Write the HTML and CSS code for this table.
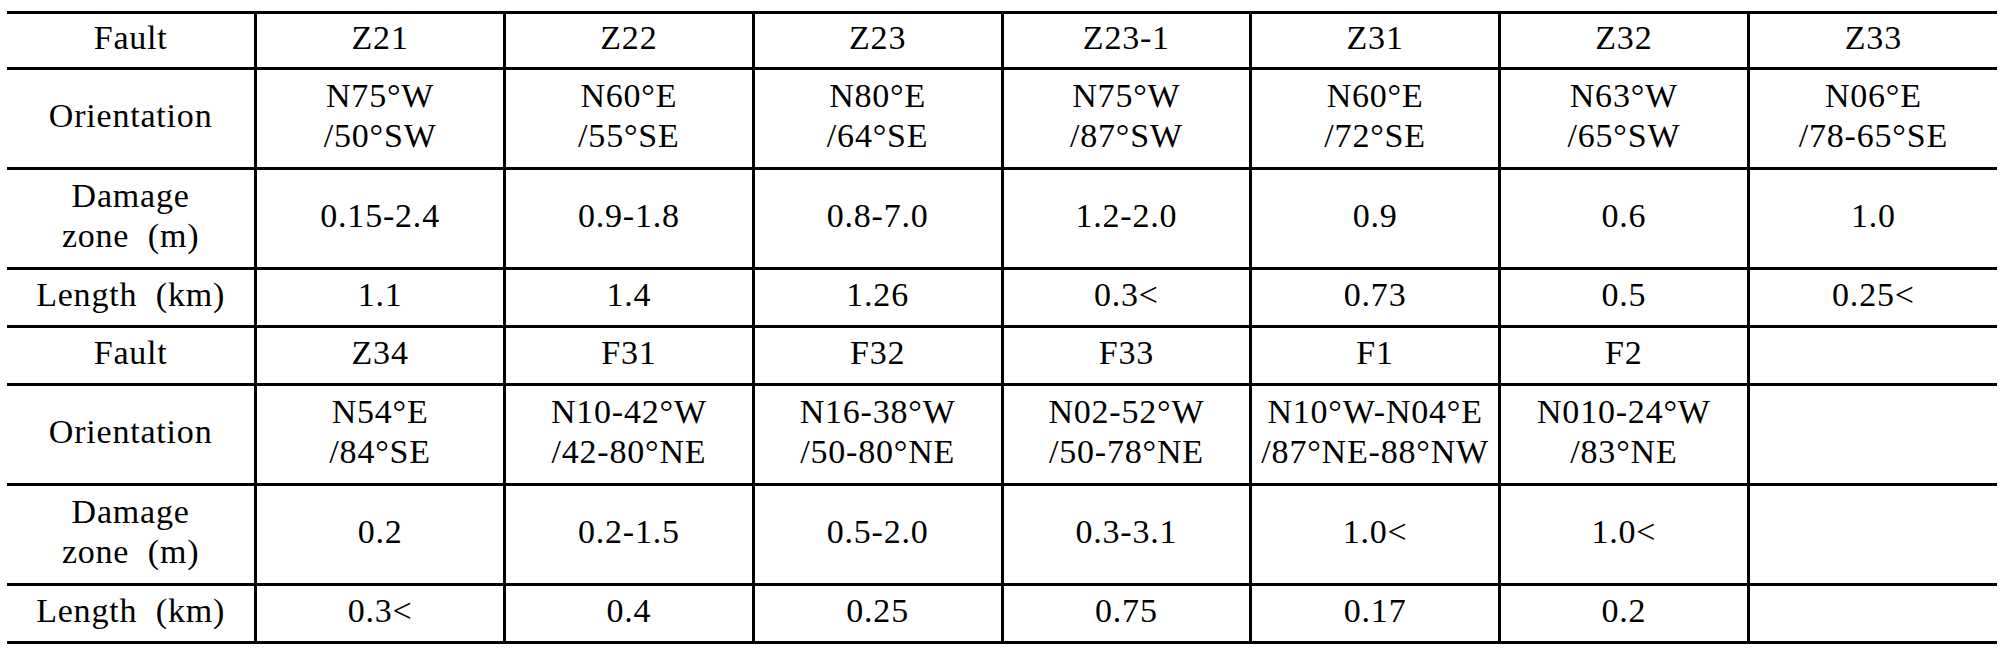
FILE: index.html
```html
<!DOCTYPE html>
<html lang="en">
  <head>
    <meta charset="UTF-8" />
    <meta name="viewport" content="width=device-width, initial-scale=1.0" />
    <title>Fault properties</title>
    <link rel="stylesheet" href="styles.css">
  </head>
  <body>
    <table class="faults">
      <tr class="short">
        <td>Fault</td>
        <td>Z21</td>
        <td>Z22</td>
        <td>Z23</td>
        <td>Z23-1</td>
        <td>Z31</td>
        <td>Z32</td>
        <td>Z33</td>
      </tr>
      <tr class="tall">
        <td>Orientation</td>
        <td>N75°W<br />/50°SW</td>
        <td>N60°E<br />/55°SE</td>
        <td>N80°E<br />/64°SE</td>
        <td>N75°W<br />/87°SW</td>
        <td>N60°E<br />/72°SE</td>
        <td>N63°W<br />/65°SW</td>
        <td>N06°E<br />/78-65°SE</td>
      </tr>
      <tr class="tall">
        <td>Damage<br />zone&nbsp;&nbsp;(m)</td>
        <td>0.15-2.4</td>
        <td>0.9-1.8</td>
        <td>0.8-7.0</td>
        <td>1.2-2.0</td>
        <td>0.9</td>
        <td>0.6</td>
        <td>1.0</td>
      </tr>
      <tr class="short">
        <td>Length&nbsp;&nbsp;(km)</td>
        <td>1.1</td>
        <td>1.4</td>
        <td>1.26</td>
        <td>0.3&lt;</td>
        <td>0.73</td>
        <td>0.5</td>
        <td>0.25&lt;</td>
      </tr>
      <tr class="short">
        <td>Fault</td>
        <td>Z34</td>
        <td>F31</td>
        <td>F32</td>
        <td>F33</td>
        <td>F1</td>
        <td>F2</td>
        <td></td>
      </tr>
      <tr class="tall">
        <td>Orientation</td>
        <td>N54°E<br />/84°SE</td>
        <td>N10-42°W<br />/42-80°NE</td>
        <td>N16-38°W<br />/50-80°NE</td>
        <td>N02-52°W<br />/50-78°NE</td>
        <td>N10°W-N04°E<br />/87°NE-88°NW</td>
        <td>N010-24°W<br />/83°NE</td>
        <td></td>
      </tr>
      <tr class="tall">
        <td>Damage<br />zone&nbsp;&nbsp;(m)</td>
        <td>0.2</td>
        <td>0.2-1.5</td>
        <td>0.5-2.0</td>
        <td>0.3-3.1</td>
        <td>1.0&lt;</td>
        <td>1.0&lt;</td>
        <td></td>
      </tr>
      <tr class="short">
        <td>Length&nbsp;&nbsp;(km)</td>
        <td>0.3&lt;</td>
        <td>0.4</td>
        <td>0.25</td>
        <td>0.75</td>
        <td>0.17</td>
        <td>0.2</td>
        <td></td>
      </tr>
    </table>
  </body>
</html>
```

FILE: styles.css
```css
* {
  margin: 0;
  padding: 0;
}
body {
  background-color: #fff;
  padding: 11px 7px 0 7px;
  font-family: "Liberation Serif", "Times New Roman", serif;
  color: #000;
}
.faults {
  width: 1990px;
  table-layout: fixed;
  border-collapse: collapse;
  border-top: 3px solid #000;
  border-bottom: 3px solid #000;
}
.faults td {
  font-size: 34px;
  line-height: 40px;
  letter-spacing: 0.8px;
  text-align: center;
  vertical-align: middle;
  padding: 0 0 6px 0;
  border: 3px solid #000;
  white-space: nowrap;
}
.faults tr td:first-child {
  border-left: none;
}
.faults tr td:last-child {
  border-right: none;
}
.short {
  height: 58px;
}
.faults tr:first-child {
  height: 56px;
}
.tall {
  height: 100px;
}
```
